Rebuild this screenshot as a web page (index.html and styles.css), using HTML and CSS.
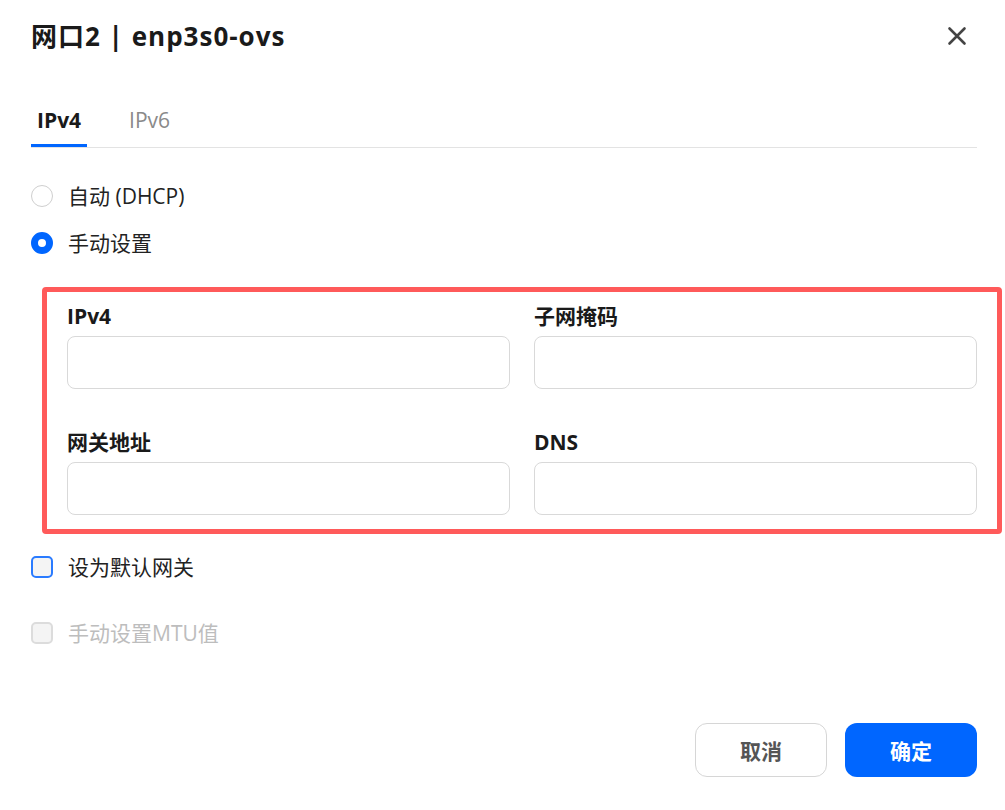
FILE: index.html
```html
<!DOCTYPE html>
<html lang="zh-CN">
<head>
<meta charset="utf-8">
<title>网口2 | enp3s0-ovs</title>
<link rel="stylesheet" href="styles.css">
</head>
<body>
<div class="dialog">
  <div class="header">
    <h1 class="title">网口2 | enp3s0-ovs</h1>
    <button class="close" aria-label="关闭">
      <svg width="20" height="20" viewBox="0 0 20 20"><path d="M2.5 2.5 L17.5 17.5 M17.5 2.5 L2.5 17.5" stroke="#444" stroke-width="2.6" stroke-linecap="round" fill="none"/></svg>
    </button>
  </div>

  <div class="tabs">
    <div class="tab active">IPv4</div>
    <div class="tab">IPv6</div>
  </div>

  <div class="options">
    <label class="option"><span class="radio"></span><span>自动 (DHCP)</span></label>
    <label class="option"><span class="radio checked"></span><span>手动设置</span></label>
  </div>

  <div class="highlight">
    <div class="fields">
      <div class="field"><div class="field-label">IPv4</div><div class="input"></div></div>
      <div class="field"><div class="field-label">子网掩码</div><div class="input"></div></div>
      <div class="field"><div class="field-label">网关地址</div><div class="input"></div></div>
      <div class="field"><div class="field-label">DNS</div><div class="input"></div></div>
    </div>
  </div>

  <div class="checks">
    <label class="option"><span class="checkbox focus"></span><span>设为默认网关</span></label>
    <label class="option disabled"><span class="checkbox"></span><span>手动设置MTU值</span></label>
  </div>

  <div class="footer">
    <button class="btn btn-cancel">取消</button>
    <button class="btn btn-ok">确定</button>
  </div>
</div>
</body>
</html>
```

FILE: styles.css
```css
* { box-sizing: border-box; }

html, body {
  margin: 0;
  background: #ffffff;
}

body {
  font-family: "Open Sans", "Noto Sans CJK SC", sans-serif;
  color: #1f1f1f;
  width: 1005px;
  height: 810px;
  overflow: hidden;
}

.dialog {
  padding: 18px 28px 0 31px;
}

.header {
  display: flex;
  align-items: center;
  justify-content: space-between;
  height: 36px;
}

.title {
  margin: 0;
  font-size: 26px;
  font-weight: 700;
  line-height: 36px;
  letter-spacing: 1px;
  color: #1a1a1a;
}

.close {
  width: 40px;
  height: 36px;
  border: 0;
  background: none;
  padding: 0;
  display: flex;
  align-items: center;
  justify-content: center;
}

.tabs {
  margin-top: 51px;
  display: flex;
  gap: 36px;
  border-bottom: 1px solid #e3e3e3;
}

.tab {
  padding: 0 6px 9px;
  font-size: 21px;
  line-height: 30px;
  color: #8a8a8a;
  border-bottom: 3px solid transparent;
}

.tab.active {
  color: #1a1a1a;
  font-weight: 700;
  border-bottom-color: #0066ff;
}

.options {
  margin-top: 36px;
  display: flex;
  flex-direction: column;
  gap: 23px;
}

.option {
  display: flex;
  align-items: center;
  gap: 15px;
  height: 24px;
  font-size: 21px;
  line-height: 24px;
  color: #222;
}

.radio {
  width: 22px;
  height: 22px;
  border-radius: 50%;
  border: 1px solid #cfcfcf;
  background: #fff;
  flex: none;
}

.radio.checked {
  border: 7px solid #0066ff;
}

.highlight {
  margin: 32px -25px 0 11px;
  border: 5px solid #ff5a5a;
  border-radius: 4px;
  padding: 10px 20px 14px;
}

.fields {
  display: grid;
  grid-template-columns: 1fr 1fr;
  column-gap: 24px;
  row-gap: 39px;
}

.field-label {
  font-size: 21px;
  font-weight: 700;
  line-height: 28px;
  color: #1a1a1a;
}

.input {
  margin-top: 6px;
  height: 53px;
  border: 1px solid #d9d9d9;
  border-radius: 8px;
  background: #fff;
}

.checks {
  margin-top: 21px;
  display: flex;
  flex-direction: column;
  gap: 42px;
}

.checkbox {
  width: 22px;
  height: 22px;
  border-radius: 5px;
  border: 2px solid #dcdcdc;
  background: #f4f4f4;
  flex: none;
}

.checkbox.focus {
  border: 2px solid #2a7bff;
}

.option.disabled {
  color: #bdbdbd;
}

.footer {
  margin-top: 78px;
  display: flex;
  justify-content: flex-end;
  gap: 18px;
}

.btn {
  width: 132px;
  height: 54px;
  border-radius: 12px;
  font-family: "Open Sans", "Noto Sans CJK SC", sans-serif;
  font-size: 21px;
  font-weight: 700;
  cursor: pointer;
}

.btn-cancel {
  background: #fff;
  border: 1px solid #d6d6d6;
  color: #555;
}

.btn-ok {
  background: #0066ff;
  border: 0;
  color: #fff;
}
```
